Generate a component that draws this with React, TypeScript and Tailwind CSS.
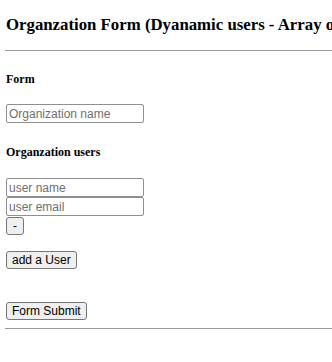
import React from 'react';

const inputCls =
  "block w-[138px] h-[19px] px-[2px] border border-[#8f8f8f] rounded-[2px] bg-white text-[12px] leading-[15px] text-black placeholder:text-[#6f6f6f] font-['Liberation_Sans',Arial,sans-serif] outline-none";

const btnCls =
  "block h-[18px] px-[5px] border border-[#767676] rounded-[3px] bg-[#efefef] text-[12px] leading-[14px] text-black font-['Liberation_Sans',Arial,sans-serif]";

export default function App() {
  return (
    <div className="w-[332px] h-[362px] overflow-hidden bg-white text-black font-['Liberation_Serif','Times_New_Roman',serif]">
      <div className="pt-[15px] pl-[6px]">
        <h3 className="whitespace-nowrap text-[16.8px] leading-[19px] font-bold">
          Organzation Form (Dyanamic users - Array of objects)
        </h3>
        <hr className="mt-[16px] ml-[-1px] mr-[-10px] border-0 border-t border-[#9a9a9a]" />

        <form onSubmit={(e) => e.preventDefault()}>
          <h5 className="mt-[21px] text-[12px] leading-[14px] font-bold">Form</h5>
          <input type="text" placeholder="Organization name" className={`${inputCls} mt-[18px]`} />

          <h5 className="mt-[22px] text-[12px] leading-[14px] font-bold">Organzation users</h5>
          <div className="mt-[19px]">
            <input type="text" placeholder="user name" className={inputCls} />
            <input type="text" placeholder="user email" className={inputCls} />
            <button type="button" className={`${btnCls} w-[18px] px-0 mt-[1px]`}>
              -
            </button>
          </div>

          <button type="button" className={`${btnCls} mt-[16px]`}>
            add a User
          </button>

          <button type="submit" className={`${btnCls} mt-[33px]`}>
            Form Submit
          </button>
        </form>
        <hr className="mt-[8px] ml-[-1px] mr-[-10px] border-0 border-t border-[#9a9a9a]" />
      </div>
    </div>
  );
}
